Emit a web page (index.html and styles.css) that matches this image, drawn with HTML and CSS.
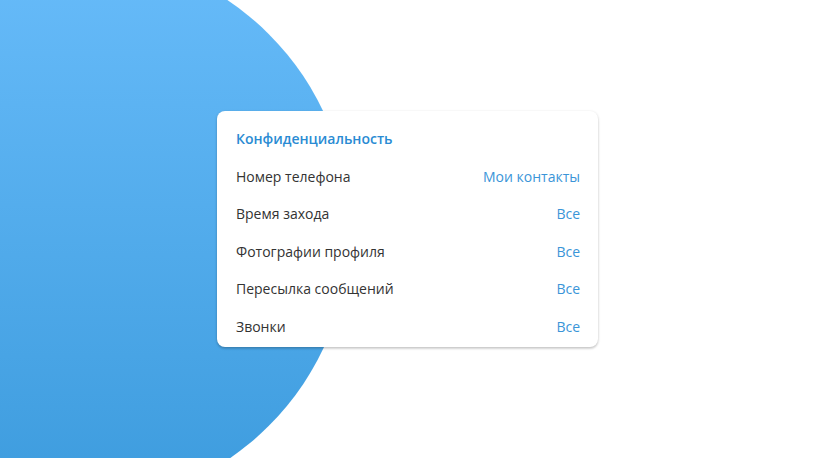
FILE: index.html
```html
<!DOCTYPE html>
<html lang="ru">
<head>
<meta charset="utf-8">
<title>Конфиденциальность</title>
<link rel="stylesheet" href="styles.css">
</head>
<body>
<div class="scene">
  <div class="blob"></div>
  <main class="stage">
    <section class="card">
      <h2 class="title">Конфиденциальность</h2>
      <div class="row"><span class="label">Номер телефона</span><span class="value">Мои контакты</span></div>
      <div class="row"><span class="label">Время захода</span><span class="value">Все</span></div>
      <div class="row"><span class="label">Фотографии профиля</span><span class="value">Все</span></div>
      <div class="row"><span class="label">Пересылка сообщений</span><span class="value">Все</span></div>
      <div class="row"><span class="label">Звонки</span><span class="value">Все</span></div>
    </section>
  </main>
</div>
</body>
</html>
```
FILE: styles.css
```css
html, body {
  margin: 0;
  padding: 0;
  height: 100%;
  overflow: hidden;
}
body {
  background: #ffffff;
  font-family: "Open Sans", "Noto Sans", sans-serif;
}
.scene {
  position: relative;
  height: 100%;
  overflow: hidden;
}
.blob {
  position: absolute;
  left: -204px;
  top: -47px;
  width: 554px;
  height: 554px;
  border-radius: 50%;
  background: linear-gradient(180deg, #68bcfa 0%, #3c9bdd 100%);
}
.stage {
  position: relative;
  height: 100%;
  display: flex;
  align-items: center;
  justify-content: center;
}
.card {
  width: 381px;
  box-sizing: border-box;
  background: #ffffff;
  border-radius: 8px;
  padding: 9px 18px 2px 19px;
  box-shadow: 0 1px 3px rgba(0, 0, 0, 0.2), 0 2px 2px rgba(0, 0, 0, 0.08);
}
.title {
  margin: 0;
  height: 37.6px;
  line-height: 37.6px;
  font-size: 14px;
  font-weight: 600;
  color: #2a8bd3;
}
.row {
  height: 37.6px;
  display: flex;
  align-items: center;
  justify-content: space-between;
  font-size: 14px;
}
.label {
  color: #333333;
}
.value {
  color: #3a95d8;
}
```
